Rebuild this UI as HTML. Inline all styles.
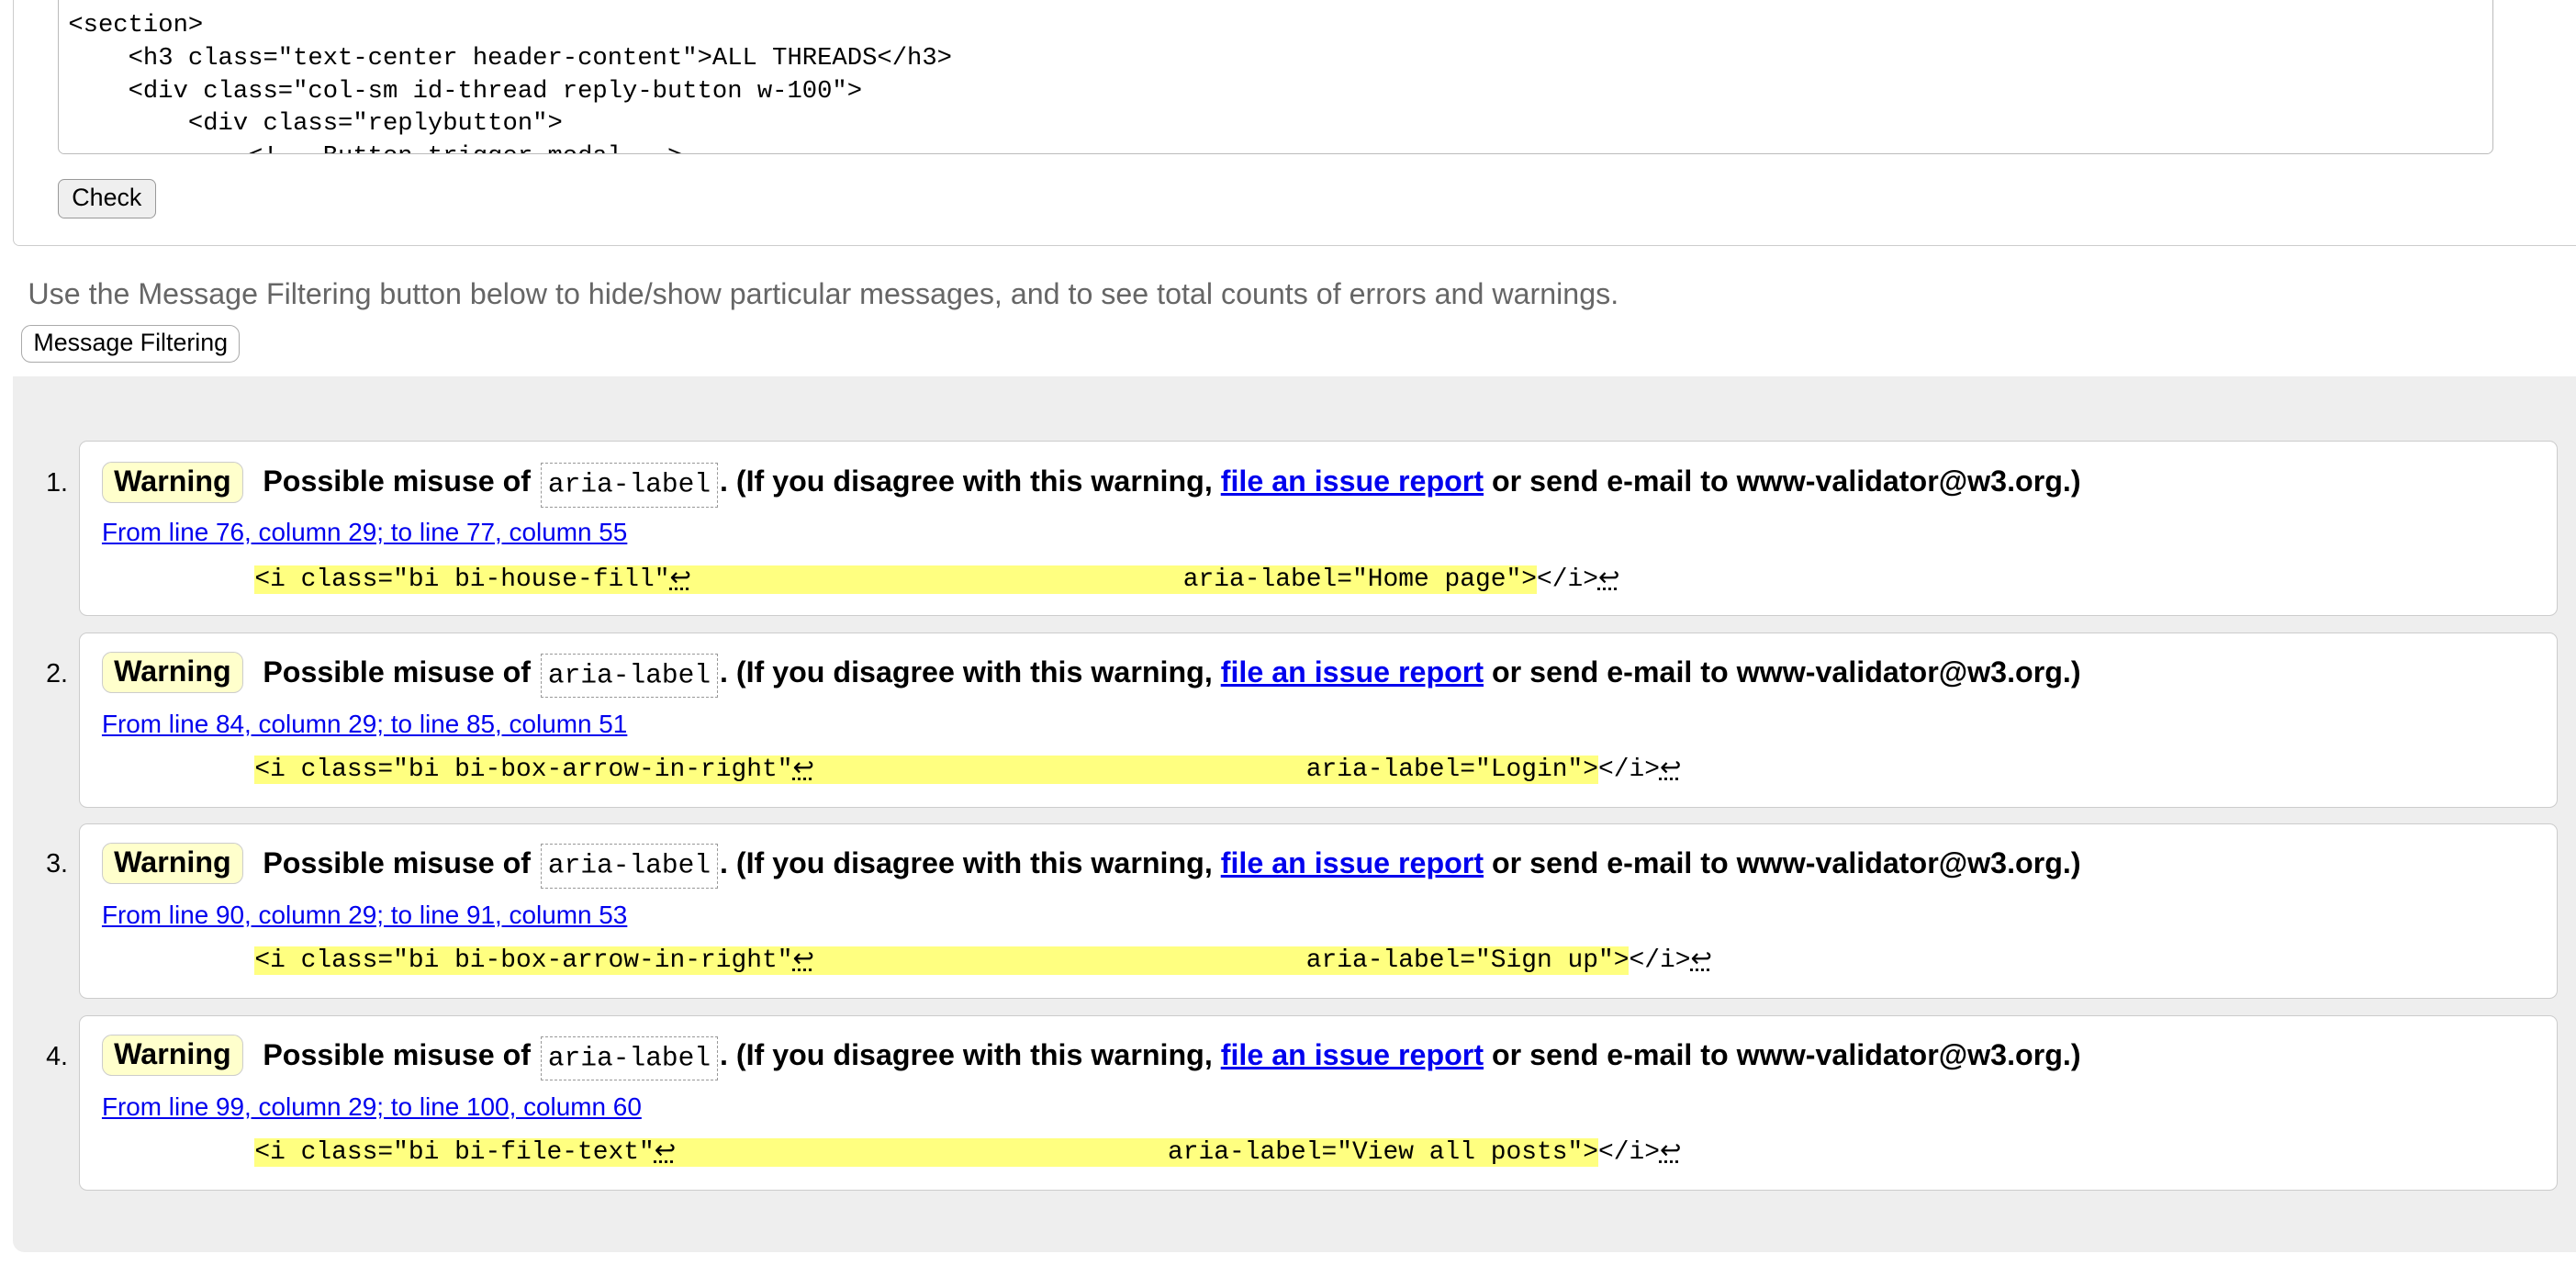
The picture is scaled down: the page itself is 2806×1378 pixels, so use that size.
<!DOCTYPE html>
<html><head><meta charset="utf-8"><style>
html{zoom:1.7895}
body{margin:0;width:1568px;height:770px;overflow:hidden;position:relative;background:#fff;font-family:"Liberation Sans",Arial,sans-serif;}
.abs{position:absolute}
.fs{left:8px;top:-10px;width:1580px;height:160px;border:1px solid #ccc;border-radius:4px;box-sizing:border-box}
.ta{left:35px;top:-10px;width:1483px;height:104px;border:1px solid #bbb;border-radius:4px;box-sizing:border-box;overflow:hidden}
.ta pre{margin:0;position:absolute;left:6px;top:15px;font:15.2px/20px "Liberation Mono",monospace;color:#000}
.btn{border:1px solid #999;border-radius:4px;background:#efefef;font-size:15px;text-align:center;box-sizing:border-box}
.para{left:17px;top:169px;font-size:18px;color:#666;white-space:nowrap}
.gray{left:8px;top:229px;width:1580px;height:533px;background:#eee;border-radius:0 0 0 7px}
.box{left:48px;width:1509px;height:107px;background:#fff;border:1px solid #ccc;border-radius:5px;box-sizing:border-box}
.num{left:28px;font-size:16px}
.badge{left:62px;width:86px;height:25px;background:#ffffcc;border:1px solid #ccc;border-radius:6px;box-sizing:border-box;font-weight:bold;font-size:18px;text-align:center;line-height:23px}
.head{left:160px;font-weight:bold;font-size:18px;white-space:nowrap}
.head code{font:normal 16.5px "Liberation Mono",monospace;border:1px dashed #999;padding:3px 4px 4px;margin:0 1px}
.head a,.loc{color:#00e;text-decoration:underline}
.loc{left:62px;font-size:15.6px;white-space:nowrap}
.code{left:155px;font:15.6px/20px "Liberation Mono",monospace;white-space:pre}
.code b{font-weight:normal;background:#ffff80}
.code i{font-style:normal;text-decoration:underline dotted}
</style></head><body>
<div class="abs fs"></div>
<div class="abs ta"><pre>&lt;section&gt;
    &lt;h3 class="text-center header-content"&gt;ALL THREADS&lt;/h3&gt;
    &lt;div class="col-sm id-thread reply-button w-100"&gt;
        &lt;div class="replybutton"&gt;
            &lt;!-- Button trigger modal --&gt;</pre></div>
<div class="abs btn" style="left:35px;top:109px;width:60px;height:24px;line-height:22px">Check</div>
<div class="abs para">Use the Message Filtering button below to hide/show particular messages, and to see total counts of errors and warnings.</div>
<div class="abs btn" style="left:13px;top:198px;width:133px;height:23px;line-height:21px;background:#fff;border-color:#aaa;border-radius:6px">Message Filtering</div>
<div class="abs gray"></div>

<div class="abs box" style="top:268px"></div>
<div class="abs num" style="top:285px">1.</div>
<div class="abs badge" style="top:281px">Warning</div>
<div class="abs head" style="top:283px">Possible misuse of <code>aria-label</code>. (If you disagree with this warning, <a>file an issue report</a> or send e-mail to www-validator@w3.org.)</div>
<div class="abs loc" style="top:315px">From line 76, column 29; to line 77, column 55</div>
<div class="abs code" style="top:343px"><b>&lt;i class="bi bi-house-fill"<i>↩</i>                                aria-label="Home page"&gt;</b>&lt;/i&gt;<i>↩</i></div>

<div class="abs box" style="top:385px"></div>
<div class="abs num" style="top:401px">2.</div>
<div class="abs badge" style="top:397px">Warning</div>
<div class="abs head" style="top:399px">Possible misuse of <code>aria-label</code>. (If you disagree with this warning, <a>file an issue report</a> or send e-mail to www-validator@w3.org.)</div>
<div class="abs loc" style="top:432px">From line 84, column 29; to line 85, column 51</div>
<div class="abs code" style="top:459px"><b>&lt;i class="bi bi-box-arrow-in-right"<i>↩</i>                                aria-label="Login"&gt;</b>&lt;/i&gt;<i>↩</i></div>

<div class="abs box" style="top:501px"></div>
<div class="abs num" style="top:517px">3.</div>
<div class="abs badge" style="top:513px">Warning</div>
<div class="abs head" style="top:515px">Possible misuse of <code>aria-label</code>. (If you disagree with this warning, <a>file an issue report</a> or send e-mail to www-validator@w3.org.)</div>
<div class="abs loc" style="top:548px">From line 90, column 29; to line 91, column 53</div>
<div class="abs code" style="top:575px"><b>&lt;i class="bi bi-box-arrow-in-right"<i>↩</i>                                aria-label="Sign up"&gt;</b>&lt;/i&gt;<i>↩</i></div>

<div class="abs box" style="top:618px"></div>
<div class="abs num" style="top:634px">4.</div>
<div class="abs badge" style="top:630px">Warning</div>
<div class="abs head" style="top:632px">Possible misuse of <code>aria-label</code>. (If you disagree with this warning, <a>file an issue report</a> or send e-mail to www-validator@w3.org.)</div>
<div class="abs loc" style="top:665px">From line 99, column 29; to line 100, column 60</div>
<div class="abs code" style="top:692px"><b>&lt;i class="bi bi-file-text"<i>↩</i>                                aria-label="View all posts"&gt;</b>&lt;/i&gt;<i>↩</i></div>
</body></html>
